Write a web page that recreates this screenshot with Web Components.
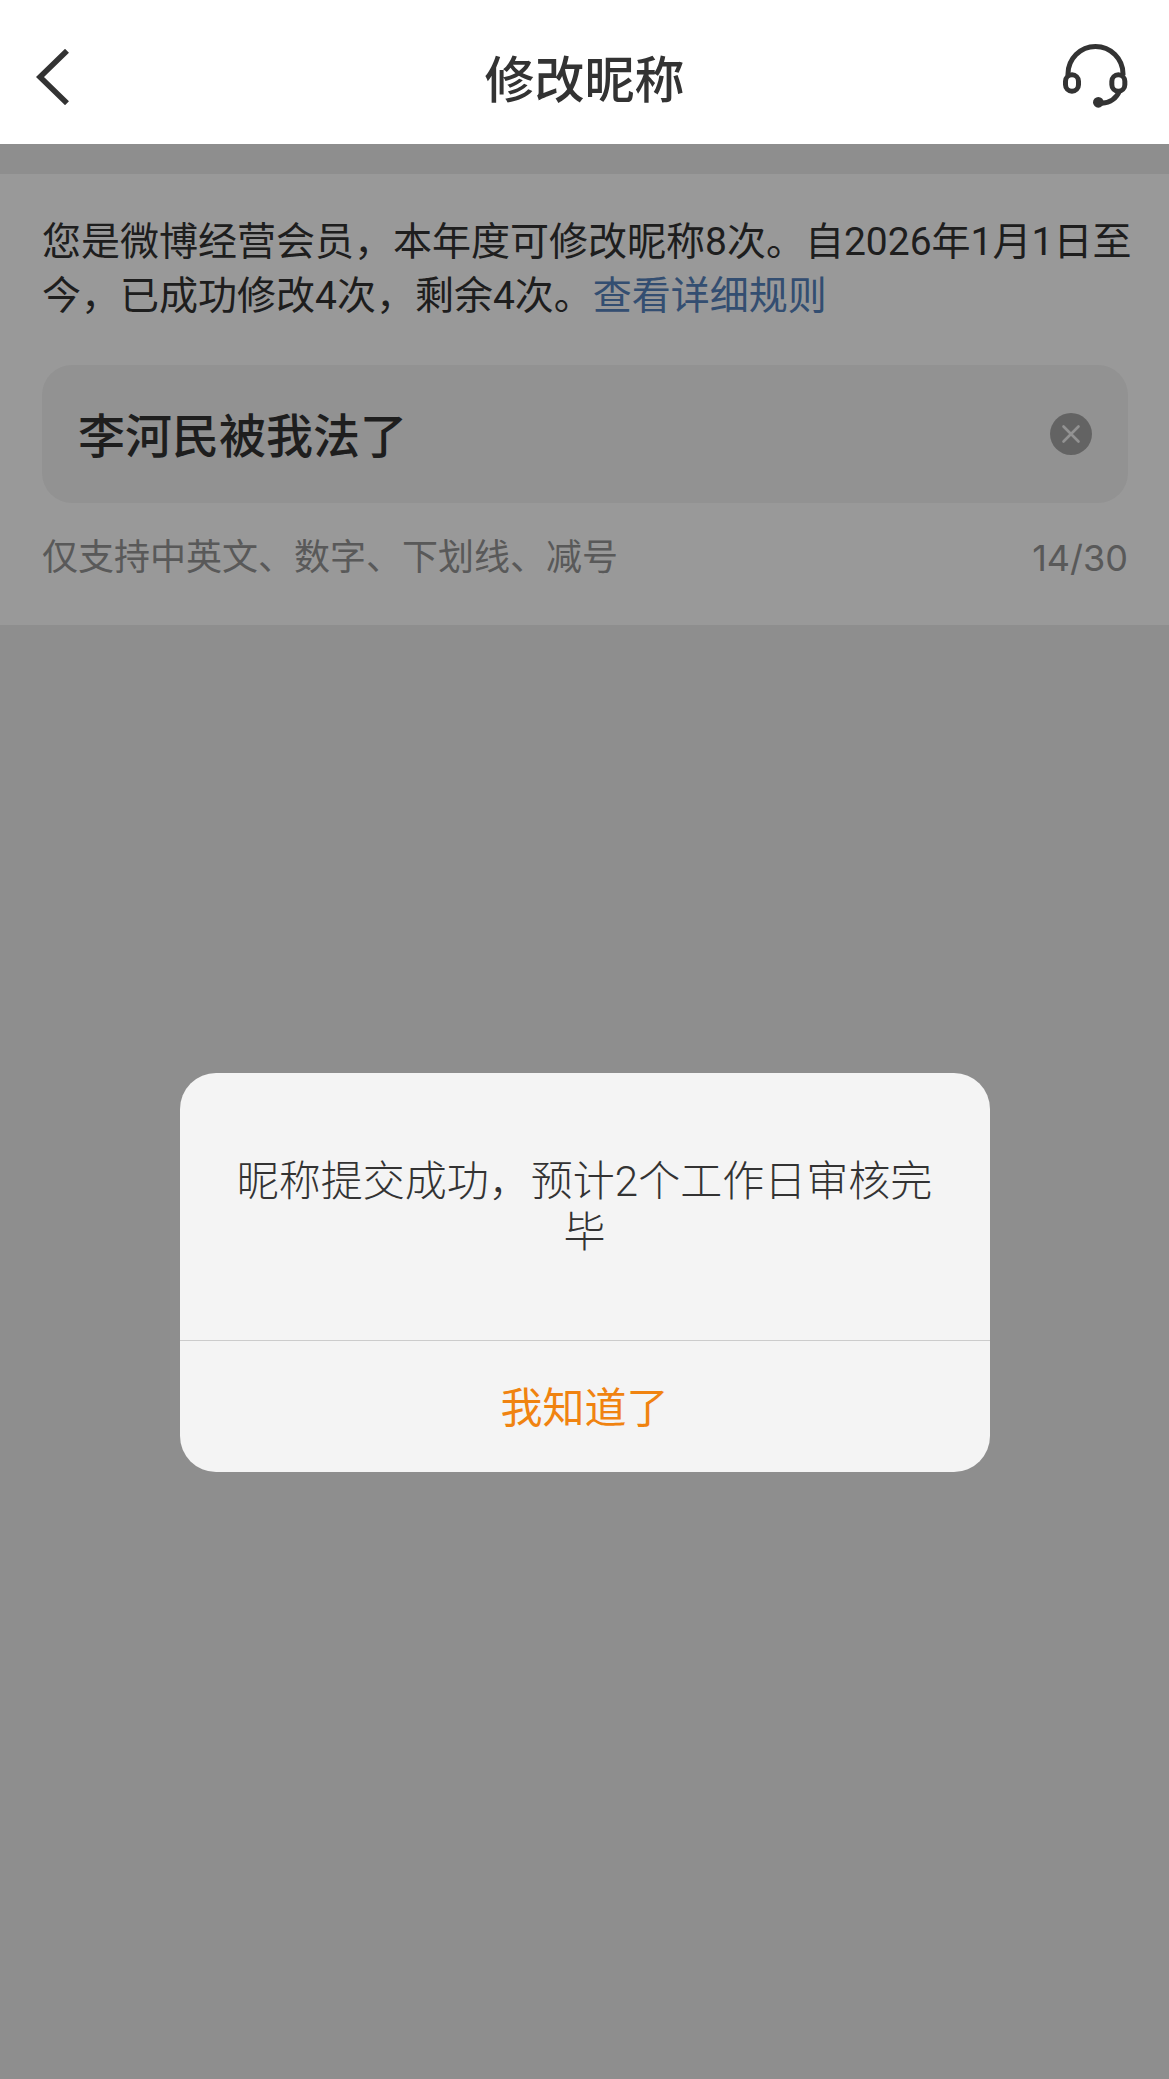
<!DOCTYPE html>
<html lang="zh-CN">
<head>
<meta charset="utf-8">
<meta name="viewport" content="width=device-width, initial-scale=1">
<title>修改昵称</title>
<style>
  body {
    margin: 0;
    background: #ededed;
    color: #333;
    font-family: Roboto, "Noto Sans CJK SC", sans-serif;
  }
</style>
</head>
<body>
<nickname-page></nickname-page>

<script>
/**
 * Top bar: back button, title (slotted), customer service button.
 */
class NavHeader extends HTMLElement {
  constructor() {
    super();
    this.attachShadow({ mode: 'open' });
  }

  connectedCallback() {
    this.shadowRoot.innerHTML = `
      <style>
        :host {
          display: grid;
          grid-template-columns: 1fr auto 1fr;
          align-items: center;
          box-sizing: border-box;
          height: 144px;
          padding: 10px 36px 0;
          background: #fff;
        }
        h1 {
          margin: 0;
          padding-top: 8px;
          font-size: 50px;
          line-height: 72px;
          font-weight: 500;
        }
        button {
          display: block;
          padding: 0;
          border: none;
          background: none;
          color: inherit;
          cursor: pointer;
        }
        .service {
          justify-self: end;
          padding-bottom: 3px;
        }
        svg { display: block; fill: none; stroke: currentColor; }
      </style>
      <button class="back" aria-label="返回">
        <svg width="34" height="56" viewBox="0 0 34 56" stroke-width="5.600">
          <path d="M31 1.8 4 28l27 26.2"/>
        </svg>
      </button>
      <h1><slot></slot></h1>
      <button class="service" aria-label="客服">
        <svg width="70" height="64" viewBox="98 70 210 192" stroke-width="15">
          <path d="M113 164v-4a82.500 82.500 0 0 1 165 0v4"/>
          <rect x="105.500" y="162.500" width="39" height="49" rx="19.500"/>
          <rect x="244.500" y="162.500" width="39" height="49" rx="19.500"/>
          <path d="M268 210c-9 22-28 36-54 38"/>
          <circle cx="204" cy="245" r="16" fill="currentColor" stroke="none"/>
        </svg>
      </button>
    `;
  }
}

/**
 * Nickname text box with clear button, hint and character counter.
 */
class NicknameField extends HTMLElement {
  constructor() {
    super();
    this.attachShadow({ mode: 'open' });
  }

  connectedCallback() {
    this.render();
    this.setupEvents();
  }

  render() {
    this.shadowRoot.innerHTML = `
      <style>
        :host { display: block; }
        .box {
          display: flex;
          align-items: center;
          box-sizing: border-box;
          height: 138px;
          padding: 0 36px;
          border-radius: 30px;
          background: #f4f4f4;
        }
        input {
          flex: 1;
          min-width: 0;
          padding: 6px 0 0;
          border: none;
          outline: none;
          background: none;
          color: inherit;
          font: 500 47px/72px Roboto, "Noto Sans CJK SC", sans-serif;
        }
        button {
          padding: 0;
          border: none;
          background: none;
          cursor: pointer;
        }
        svg { display: block; }
        .meta {
          display: flex;
          justify-content: space-between;
          margin-top: 28px;
          color: #949494;
          font-size: 36px;
          line-height: 54px;
        }
        .count { font-family: Inter, sans-serif; }
      </style>
      <div class="box">
        <input id="nick" type="text" aria-label="昵称" aria-describedby="hint" value="${this.getAttribute('value') || ''}">
        <button id="clearBtn" aria-label="清空">
          <svg width="42" height="42" viewBox="0 0 42 42">
            <circle cx="21" cy="21" r="21" fill="#a6a6a6"/>
            <path d="M13.500 13.500l15 15m0-15l-15 15" stroke="#f4f4f4" stroke-width="2.600" stroke-linecap="round"/>
          </svg>
        </button>
      </div>
      <div class="meta">
        <span id="hint"><slot></slot></span>
        <span class="count"></span>
      </div>
    `;
    this.updateCount();
  }

  // A Chinese character counts as two
  updateCount() {
    const value = this.shadowRoot.getElementById('nick').value;
    const length = [...value].reduce((n, c) => n + (c.charCodeAt(0) > 255 ? 2 : 1), 0);
    this.shadowRoot.querySelector('.count').textContent = `${length}/${this.getAttribute('max')}`;
  }

  setupEvents() {
    const input = this.shadowRoot.getElementById('nick');
    input.addEventListener('input', () => this.updateCount());
    this.shadowRoot.getElementById('clearBtn').addEventListener('click', () => {
      input.value = '';
      this.updateCount();
      input.focus();
    });
  }
}

/**
 * Modal message over a dimmed backdrop, with one confirm button.
 */
class AlertDialog extends HTMLElement {
  constructor() {
    super();
    this.attachShadow({ mode: 'open' });
  }

  connectedCallback() {
    this.shadowRoot.innerHTML = `
      <style>
        :host {
          position: absolute;
          inset: 0;
          display: grid;
          grid-template-rows: 929fr auto 607fr;
          justify-items: center;
          background: rgba(0, 0, 0, 0.4);
        }
        .dialog {
          grid-row: 2;
          width: 810px;
          max-width: 90%;
          border-radius: 36px;
          overflow: hidden;
          background: #f4f4f4;
        }
        p {
          margin: 0;
          padding: 83px 42px 82px;
          font-size: 42px;
          line-height: 51px;
          font-weight: 300;
          text-align: center;
        }
        button {
          display: block;
          width: 100%;
          height: 132px;
          padding: 5px 0 0;
          border: none;
          border-top: 1px solid #ccc;
          background: none;
          color: #f08310;
          font: 400 42px/60px Roboto, "Noto Sans CJK SC", sans-serif;
          cursor: pointer;
        }
      </style>
      <div class="dialog" role="alertdialog" aria-modal="true" aria-describedby="message">
        <p id="message"><slot></slot></p>
        <button id="okBtn">${this.getAttribute('confirm') || '确定'}</button>
      </div>
    `;
    this.shadowRoot.getElementById('okBtn').addEventListener('click', () => this.remove());
  }
}

class NicknamePage extends HTMLElement {
  constructor() {
    super();
    this.attachShadow({ mode: 'open' });
  }

  connectedCallback() {
    this.shadowRoot.innerHTML = `
      <style>
        :host {
          display: flex;
          flex-direction: column;
          min-height: 100vh;
        }
        main {
          position: relative;
          flex: 1;
          padding-top: 30px;
        }
        section {
          padding: 41px 0 40px;
          background: #fff;
        }
        .rules {
          margin: 0;
          padding: 0 36px 0 42px;
          font-size: 39px;
          line-height: 54px;
        }
        a {
          display: inline-block;
          color: #5682bc;
          text-decoration: none;
        }
        nickname-field { margin: 42px 41px 0 42px; }
      </style>
      <nav-header>修改昵称</nav-header>
      <main>
        <section>
          <p class="rules">您是微博经营会员，本年度可修改昵称8次。自2026年1月1日至今，已成功修改4次，剩余4次。<a href="#rules">查看详细规则</a></p>
          <nickname-field value="李河民被我法了" max="30">仅支持中英文、数字、下划线、减号</nickname-field>
        </section>
        <alert-dialog confirm="我知道了">昵称提交成功，预计2个工作日审核完毕</alert-dialog>
      </main>
    `;
  }
}

customElements.define('nav-header', NavHeader);
customElements.define('nickname-field', NicknameField);
customElements.define('alert-dialog', AlertDialog);
customElements.define('nickname-page', NicknamePage);
</script>
</body>
</html>
